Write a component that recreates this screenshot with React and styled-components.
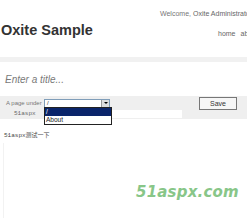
import React from 'react'
import styled, { createGlobalStyle } from 'styled-components'

const Global = createGlobalStyle`
  html, body { margin: 0; padding: 0; background: #fff; overflow: hidden; }
  body { font-family: "Liberation Sans", Arial, sans-serif; }
`

const Page = styled.div`
  position: relative;
  width: 247px;
  height: 222px;
  overflow: hidden;
`

const Header = styled.div`
  display: grid;
  grid-template-columns: 1fr auto;
  width: 280px;
  height: 57px;
`

const Title = styled.h1`
  margin: 0;
  padding: 22px 0 0 1px;
  font-family: "Liberation Sans", sans-serif;
  font-weight: bold;
  font-size: 14.5px;
  color: #333;
`

const Right = styled.div`
  display: flex;
  flex-direction: column;
  align-items: flex-end;
  padding-top: 10px;
  gap: 13px;
  font-size: 7px;
  color: #777;
  white-space: nowrap;
`

const Welcome = styled.div`
  width: 120px;
  text-align: left;
  b { font-weight: normal; color: #666; }
`

const Nav = styled.div`
  display: flex;
  gap: 5px;
  width: 62px;
  a { color: #666; text-decoration: none; }
`

const Band = styled.div`
  height: 5px;
  background: #f1f1f1;
`

const TitleInput = styled.div`
  height: 34px;
  display: flex;
  align-items: center;
  padding-left: 5px;
  font-style: italic;
  font-size: 10px;
  color: #7a7a7a;
`

const Toolbar = styled.div`
  position: relative;
  background: #efefef;
  height: 22px;
  display: grid;
  grid-template-columns: 44px 1fr auto;
  grid-template-rows: 12px 9px;
  align-items: center;
  padding-top: 1px;
  font-size: 6px;
  color: #777;
`

const Label = styled.span`
  grid-column: 1;
  padding-left: ${p => p.$mono ? '14px' : '6px'};
  white-space: nowrap;
  font-family: ${p => p.$mono ? '"Liberation Mono", monospace' : 'inherit'};
  color: ${p => p.$mono ? '#666' : '#777'};
`

const Select = styled.div`
  grid-column: 2;
  width: 66px;
  height: 9px;
  box-sizing: border-box;
  border: 1px solid #7f9db9;
  background: #fff;
  display: flex;
  justify-content: space-between;
  font-size: 6px;
  color: #333;
  line-height: 7px;
  padding-left: 2px;
`

const Arrow = styled.span`
  width: 7px;
  height: 7px;
  background: #ddd;
  border-left: 1px solid #999;
  display: flex;
  align-items: center;
  justify-content: center;
  &::after {
    content: '';
    border-left: 2px solid transparent;
    border-right: 2px solid transparent;
    border-top: 2px solid #000;
  }
`

const Field = styled.div`
  grid-column: 2;
  width: 138px;
  height: 8px;
  background: #fff;
`

const SaveButton = styled.button`
  grid-column: 3;
  grid-row: 1 / span 2;
  align-self: start;
  margin-right: 10px;
  width: 38px;
  height: 13px;
  padding: 0;
  border: 1px solid #777;
  background: #f6f6f6;
  font-family: "Liberation Sans", sans-serif;
  font-size: 7px;
  color: #333;
`

const Dropdown = styled.ul`
  position: absolute;
  left: 44px;
  top: 11px;
  width: 68px;
  margin: 0;
  padding: 0;
  list-style: none;
  box-sizing: border-box;
  border: 1px solid #222;
  background: #fff;
  font-size: 6.5px;
  color: #222;
`

const Option = styled.li`
  height: 8px;
  line-height: 8px;
  padding-left: 1px;
  background: ${p => p.$active ? '#0a246a' : '#fff'};
  color: ${p => p.$active ? '#fff' : '#222'};
`

const Body = styled.div`
  padding: 11px 0 0 4px;
  font-family: "Liberation Mono", "Noto Sans CJK SC", monospace;
  font-size: 6px;
  color: #444;
`

const Content = styled.div`
  margin: 4px 0 0 -1px;
  height: 75px;
  border-left: 1px solid #f2f2f2;
`

const Watermark = styled.div`
  position: absolute;
  left: 136px;
  top: 183px;
  font-family: "DejaVu Sans", sans-serif;
  font-weight: bold;
  font-style: italic;
  font-size: 15px;
  color: #88c688;
  letter-spacing: 0.2px;
`

export default function App() {
  return (
    <Page>
      <Global />
      <Header>
        <Title>Oxite Sample</Title>
        <Right>
          <Welcome>Welcome, <b>Oxite Administrator</b></Welcome>
          <Nav><a>home</a><a>about</a></Nav>
        </Right>
      </Header>
      <Band />
      <TitleInput>Enter a title...</TitleInput>
      <Toolbar>
        <Label>A page under</Label>
        <Select>/<Arrow /></Select>
        <SaveButton>Save</SaveButton>
        <Label $mono>51aspx</Label>
        <Field />
        <Dropdown>
          <Option $active>/</Option>
          <Option>About</Option>
        </Dropdown>
      </Toolbar>
      <Body>
        51aspx测试一下
        <Content />
      </Body>
      <Watermark>51aspx.com</Watermark>
    </Page>
  )
}
